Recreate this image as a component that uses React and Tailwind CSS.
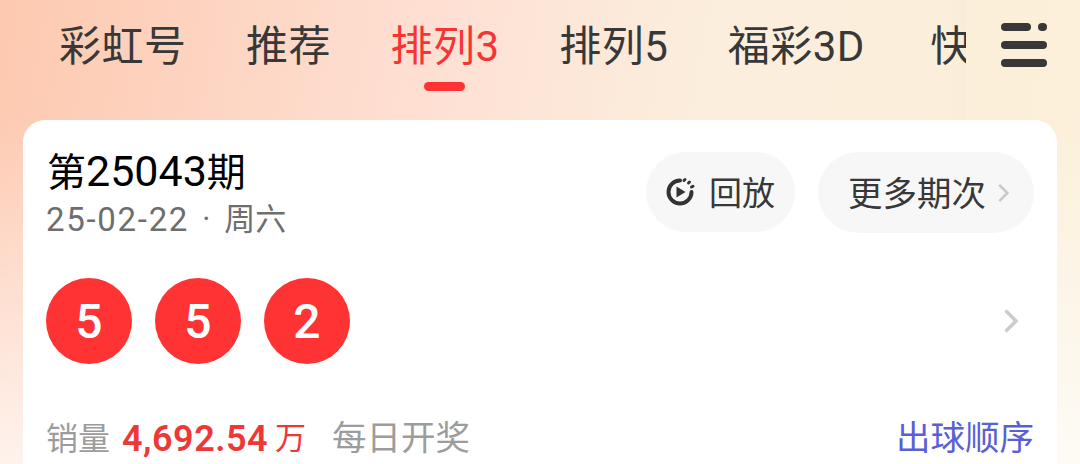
const tabs = ['彩虹号', '推荐', '排列3', '排列5', '福彩3D', '快3'];
const balls = [5, 5, 2];

const Chevron = ({ className }) => (
    <svg viewBox="0 0 16 26" className={className} fill="none" stroke="currentColor" strokeWidth="3.4">
        <path d="M2.5 2.5 L13 13 L2.5 23.5" />
    </svg>
);

const ReplayIcon = () => (
    <svg viewBox="0 0 32 32" className="w-[32px] h-[32px] text-[#333]">
        <path d="M16 4.5 A11.5 11.5 0 1 0 27.5 16" fill="none" stroke="currentColor" strokeWidth="4" strokeLinecap="round" />
        <path d="M20 4.5 L21 3.5 M24.5 7 L25.5 6 M27.5 11 L29 10.2" fill="none" stroke="currentColor" strokeWidth="3" strokeLinecap="round" />
        <path d="M12.5 10.5 L21.5 16 L12.5 21.5 Z" fill="currentColor" />
    </svg>
);

const App = () => {
    return (
        <div className="w-[1080px] h-[464px] overflow-hidden font-['Roboto','Noto_Sans_CJK_SC',sans-serif] bg-[linear-gradient(to_bottom,rgba(255,255,255,0)_25%,rgba(255,255,255,0.75)_100%),linear-gradient(100deg,#fdc9b0_0%,#fee0d3_38%,#fbeedd_62%,#fbf0d9_100%)]">
            {/* top tabs */}
            <div className="flex h-[120px]">
                <div className="relative w-[966px] overflow-hidden flex items-start pl-[59px] gap-[59.5px] pt-[21px] shrink-0">
                    {tabs.map((tab) => (
                        <div key={tab} className={`relative shrink-0 h-[52px] flex items-center ${tab === '福彩3D' ? 'w-[143px]' : ''}`}>
                            <span className={`text-[42px] leading-[52px] tracking-[0.5px] ${tab === '排列3' ? 'text-[#f53434]' : 'text-[#383838]'}`}>{tab}</span>
                            {tab === '排列3' && (
                                <div className="absolute left-[33px] top-[61px] w-[41px] h-[9px] rounded-full bg-[#ff3333]" />
                            )}
                        </div>
                    ))}
                    <div className="absolute right-0 top-0 w-[16px] h-full bg-gradient-to-r from-transparent to-[rgba(0,0,0,0.012)]" />
                </div>
                <div className="flex-1 pl-[35px] pt-[23px]">
                    <div className="w-[46px] flex flex-col gap-[10px]">
                        <div className="flex gap-[7px]">
                            <div className="w-[30px] h-[8px] rounded-full bg-[#383838]" />
                            <div className="w-[9px] h-[8px] rounded-full bg-[#383838]" />
                        </div>
                        <div className="h-[8px] rounded-full bg-[#383838]" />
                        <div className="h-[8px] rounded-full bg-[#383838]" />
                    </div>
                </div>
            </div>

            {/* draw card */}
            <div className="mx-[23px] h-[400px] bg-white rounded-[22px] pl-[23px] pr-[23px] pt-[30px]">
                <div className="flex justify-between items-start">
                    <div className="pl-[1px]">
                        <div className="text-[39px] leading-[42px] text-black">
                            第<span className="text-[43px]">25043</span>期
                        </div>
                        <div className="flex items-center text-[#6e6e6e] mt-[8px] h-[36px] -ml-[1px]">
                            <span className="text-[33px] tracking-[1.7px]">25-02-22</span>
                            <span className="text-[31px] ml-[13px]">·</span>
                            <span className="text-[31px] ml-[14px]">周六</span>
                        </div>
                    </div>
                    <div className="flex gap-[23px] mt-[2px]">
                        <div className="h-[80px] w-[149px] rounded-full bg-[#f7f7f7] flex items-center pl-[18px] gap-[13px]">
                            <ReplayIcon />
                            <span className="text-[33px] text-[#383838] pt-[4px]">回放</span>
                        </div>
                        <div className="h-[81px] w-[216px] rounded-full bg-[#f7f7f7] flex items-center pl-[30px] gap-[11px]">
                            <span className="text-[34.5px] text-[#383838] pt-[5px]">更多期次</span>
                            <Chevron className="w-[13px] h-[20px] text-[#c9c9c9]" />
                        </div>
                    </div>
                </div>

                <div className="flex items-center mt-[40px]">
                    <div className="flex gap-[23px] flex-1">
                        {balls.map((ball, i) => (
                            <div key={i} className="w-[86px] h-[86px] rounded-full bg-[#ff3333] text-white flex items-center justify-center text-[48px] font-medium pt-[1px]">
                                {ball}
                            </div>
                        ))}
                    </div>
                    <Chevron className="w-[16px] h-[26px] text-[#cccccc] mr-[15px]" />
                </div>

                <div className="flex items-center justify-between mt-[55px] h-[40px]">
                    <div className="flex items-center">
                        <span className="text-[32px] text-[#9c9c9c]">销量</span>
                        <span className="text-[36px] font-semibold text-[#ee3838] ml-[12px] tracking-[0.5px]">4,692.54</span>
                        <span className="text-[31px] text-[#ee3838] ml-[7px]">万</span>
                        <span className="text-[34.5px] text-[#9c9c9c] ml-[26px]">每日开奖</span>
                    </div>
                    <span className="text-[34.5px] text-[#5a5fd6]">出球顺序</span>
                </div>
            </div>
        </div>
    );
};

export default App;
